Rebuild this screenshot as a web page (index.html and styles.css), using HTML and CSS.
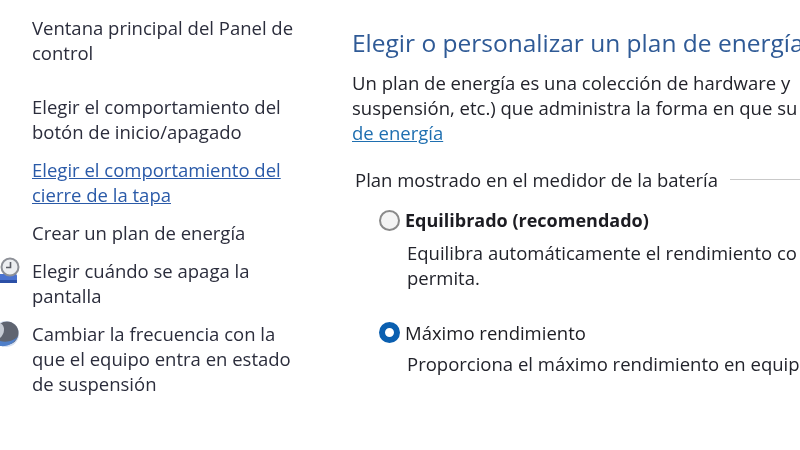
FILE: index.html
```html
<!DOCTYPE html>
<html lang="es">
<head>
<meta charset="utf-8">
<title>Opciones de energía</title>
<link rel="stylesheet" href="styles.css">
</head>
<body>
<div class="page">
  <nav class="side">
    <a class="nav-item home">Ventana principal del Panel de<br>control</a>
    <ul class="tasks">
      <li class="nav-item">Elegir el comportamiento del<br>botón de inicio/apagado</li>
      <li class="nav-item link">Elegir el comportamiento del<br>cierre de la tapa</li>
      <li class="nav-item">Crear un plan de energía</li>
      <li class="nav-item with-icon">
        <svg class="task-icon" viewBox="0 0 20 27" aria-hidden="true">
          <rect x="-8" y="18" width="25" height="9" rx="1.500" fill="#4a72cf"/>
          <rect x="-8" y="24" width="25" height="3" fill="#2b4fa6"/>
          <circle cx="10" cy="11" r="8.500" fill="#eceef1" stroke="#8d9097" stroke-width="2"/>
          <path d="M10.500 6V11.500H6" fill="none" stroke="#5b5e66" stroke-width="1.600"/>
        </svg>
        Elegir cuándo se apaga la<br>pantalla
      </li>
      <li class="nav-item with-icon">
        <svg class="task-icon moon" viewBox="0 0 20 27" aria-hidden="true">
          <circle cx="6" cy="13" r="13" fill="#d5e0f2"/>
          <circle cx="7" cy="12" r="11.500" fill="#5f6470"/>
          <path d="M0 2C4 4 5 8 3 13C2 15 1 16 0 17Z" fill="#c6cbd4"/>
          <path d="M0 25C8 26 15 22 18 15C15 19 8 22 0 20Z" fill="#4f7fc9"/>
        </svg>
        Cambiar la frecuencia con la<br>que el equipo entra en estado<br>de suspensión
      </li>
    </ul>
  </nav>
  <main class="main">
    <h1 class="title">Elegir o personalizar un plan de energía</h1>
    <p class="intro">Un plan de energía es una colección de hardware y<br>suspensión, etc.) que administra la forma en que su<br><a class="intro-link">de energía</a></p>
    <section class="group">
      <div class="group-head"><span>Plan mostrado en el medidor de la batería</span><span class="rule"></span></div>
      <div class="plan">
        <div class="plan-row"><span class="radio"></span><strong class="plan-name bold">Equilibrado (recomendado)</strong></div>
        <p class="plan-desc">Equilibra automáticamente el rendimiento co<br>permita.</p>
      </div>
      <div class="plan second">
        <div class="plan-row"><span class="radio on"></span><span class="plan-name">Máximo rendimiento</span></div>
        <p class="plan-desc tight">Proporciona el máximo rendimiento en equip</p>
      </div>
    </section>
  </main>
</div>
</body>
</html>
```
FILE: styles.css
```css
html, body {
  margin: 0;
  padding: 0;
  width: 800px;
  height: 450px;
  overflow: hidden;
  background: #fff;
}
body {
  font-family: "Open Sans", "Noto Sans", sans-serif;
  font-size: 18.500px;
  line-height: 25px;
  color: #2b2d3c;
}
.page {
  display: flex;
  width: 800px;
  height: 450px;
  overflow: hidden;
  filter: blur(0.350px);
}
.side {
  flex: 0 0 352px;
  padding-top: 15px;
  box-sizing: border-box;
}
.nav-item {
  display: block;
  padding-left: 32px;
  white-space: nowrap;
}
.tasks {
  list-style: none;
  margin: 29px 0 0;
  padding: 0;
  display: flex;
  flex-direction: column;
  gap: 13px;
}
.link {
  color: #2a5aa8;
  text-decoration: underline;
}
.with-icon {
  position: relative;
}
.task-icon {
  position: absolute;
  left: 0;
  top: -2px;
  width: 20px;
  height: 27px;
}
.moon {
  top: 0;
}
.main {
  flex: 1;
  min-width: 0;
  padding-top: 26px;
}
.title {
  margin: 0;
  font-size: 24.500px;
  line-height: 34px;
  font-weight: 400;
  color: #2f5a96;
  white-space: nowrap;
}
.intro {
  margin: 10px 0 0;
  white-space: nowrap;
  color: #22232b;
}
.intro-link {
  color: #1f6fb0;
  text-decoration: underline;
}
.group {
  margin-top: 22px;
  padding-left: 3px;
  color: #22232b;
}
.group-head {
  display: flex;
  align-items: center;
  gap: 12px;
  white-space: nowrap;
}
.rule {
  flex: 1;
  height: 1px;
  background: #c9c9c9;
}
.plan {
  margin-top: 16px;
}
.second {
  margin-top: 30px;
}
.plan-row {
  display: flex;
  align-items: center;
  gap: 5px;
  margin-left: 24px;
  white-space: nowrap;
}
.radio {
  flex: none;
  box-sizing: border-box;
  width: 21px;
  height: 21px;
  border-radius: 50%;
  border: 2px solid #8a8a8a;
  background: #f4f4f4;
}
.radio.on {
  border: 6px solid #0a5fb0;
  background: #fff;
}
.plan-name {
  color: #1c1c22;
}
.bold {
  font-size: 18px;
}
.plan-desc {
  margin: 7px 0 0 52px;
  white-space: nowrap;
}
.tight {
  margin-top: 6px;
}
```
